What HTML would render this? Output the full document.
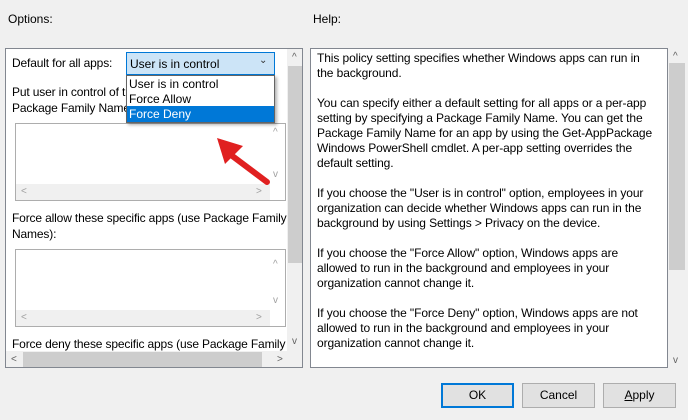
<!DOCTYPE html>
<html><head><meta charset="utf-8"><style>
*{margin:0;padding:0;box-sizing:border-box}
body{width:688px;height:420px;background:#f0f0f0;font-family:"Liberation Sans",sans-serif;font-size:12px;color:#000;position:relative;overflow:hidden}
.a{position:absolute;white-space:nowrap}
.box{position:absolute;border:1px solid #828790;background:#fff}
.sb{position:absolute;background:#f0f0f0}
.thumb{position:absolute;background:#cdcdcd}
.ar{position:absolute;color:#a0a0a0;font-size:10px;line-height:10px}
.btn{position:absolute;top:383px;height:25px;width:73px;background:#e1e1e1;border:1px solid #adadad;text-align:center;line-height:23px;font-size:12px}
.lp .a{letter-spacing:-0.15px}
</style></head><body>
<div class="a" style="left:8px;top:12px">Options:</div>
<div class="a" style="left:313px;top:12px">Help:</div>

<div class="box lp" style="left:5px;top:48px;width:298px;height:320px;overflow:hidden">
  <div class="a" style="left:6px;top:7px">Default for all apps:</div>
  <div class="a" style="left:6px;top:36px">Put user in control of t</div>
  <div class="a" style="left:6px;top:52px">Package Family Name</div>
  <div class="box" style="left:9px;top:74px;width:271px;height:78px;border-color:#adadad">
    <div class="sb" style="left:0;top:60px;width:254px;height:16px"></div>
    <div class="ar" style="left:5px;top:63px">&lt;</div><div class="ar" style="left:240px;top:63px">&gt;</div>
    <div class="ar" style="left:257px;top:4px">^</div><div class="ar" style="left:257px;top:46px">v</div>
  </div>
  <div class="a" style="left:6px;top:162px">Force allow these specific apps (use Package Family</div>
  <div class="a" style="left:6px;top:178px">Names):</div>
  <div class="box" style="left:9px;top:200px;width:271px;height:78px;border-color:#adadad">
    <div class="sb" style="left:0;top:60px;width:254px;height:16px"></div>
    <div class="ar" style="left:5px;top:63px">&lt;</div><div class="ar" style="left:240px;top:63px">&gt;</div>
    <div class="ar" style="left:257px;top:10px">^</div><div class="ar" style="left:257px;top:46px">v</div>
  </div>
  <div class="a" style="left:6px;top:288px">Force deny these specific apps (use Package Family</div>
  <div class="sb" style="left:281px;top:0;width:16px;height:302px"></div>
  <div class="thumb" style="left:282px;top:17px;width:14px;height:197px"></div>
  <div class="ar" style="left:286px;top:4px;color:#606060">^</div>
  <div class="ar" style="left:286px;top:288px;color:#606060">v</div>
  <div class="sb" style="left:0;top:302px;width:297px;height:17px"></div>
  <div class="thumb" style="left:17px;top:303px;width:239px;height:15px"></div>
  <div class="ar" style="left:5px;top:306px;color:#606060">&lt;</div>
  <div class="ar" style="left:271px;top:306px;color:#606060">&gt;</div>
</div>

<div style="position:absolute;left:126px;top:52px;width:149px;height:23px;background:#cce4f7;border:1px solid #0078d7"></div>
<div class="a" style="left:130px;top:57px">User is in control</div>
<div class="a" style="left:259px;top:55px;font-size:10px;color:#333">&#8964;</div>
<div style="position:absolute;left:126px;top:75px;width:149px;height:48px;background:#fff;border:1px solid #646464;box-shadow:2px 2px 3px rgba(0,0,0,.3)"></div>
<div style="position:absolute;left:127px;top:106px;width:147px;height:16px;background:#0078d7"></div>
<div class="a" style="left:129px;top:77px">User is in control</div>
<div class="a" style="left:129px;top:92px">Force Allow</div>
<div class="a" style="left:129px;top:107px;color:#fff">Force Deny</div>

<svg style="position:absolute;left:205px;top:130px" width="70" height="60"><line x1="62" y1="52" x2="22" y2="22" stroke="#e02020" stroke-width="6" stroke-linecap="round"/><polygon points="12,8 38,16 20,34" fill="#e02020"/></svg>

<div class="box" style="left:310px;top:48px;width:358px;height:320px;padding:2px 0 0 6px;line-height:15px;white-space:nowrap;letter-spacing:-0.1px">
This policy setting specifies whether Windows apps can run in<br>the background.<br><br>You can specify either a default setting for all apps or a per-app<br>setting by specifying a Package Family Name. You can get the<br>Package Family Name for an app by using the Get-AppPackage<br>Windows PowerShell cmdlet. A per-app setting overrides the<br>default setting.<br><br>If you choose the "User is in control" option, employees in your<br>organization can decide whether Windows apps can run in the<br>background by using Settings &gt; Privacy on the device.<br><br>If you choose the "Force Allow" option, Windows apps are<br>allowed to run in the background and employees in your<br>organization cannot change it.<br><br>If you choose the "Force Deny" option, Windows apps are not<br>allowed to run in the background and employees in your<br>organization cannot change it.
</div>
<div class="sb" style="left:668px;top:48px;width:18px;height:320px"></div>
<div class="thumb" style="left:669px;top:63px;width:16px;height:207px"></div>
<div class="ar" style="left:673px;top:52px;color:#606060">^</div>
<div class="ar" style="left:673px;top:356px;color:#606060">v</div>

<div class="btn" style="left:441px;border:2px solid #0078d7;line-height:21px">OK</div>
<div class="btn" style="left:522px">Cancel</div>
<div class="btn" style="left:603px"><u>A</u>pply</div>
</body></html>
